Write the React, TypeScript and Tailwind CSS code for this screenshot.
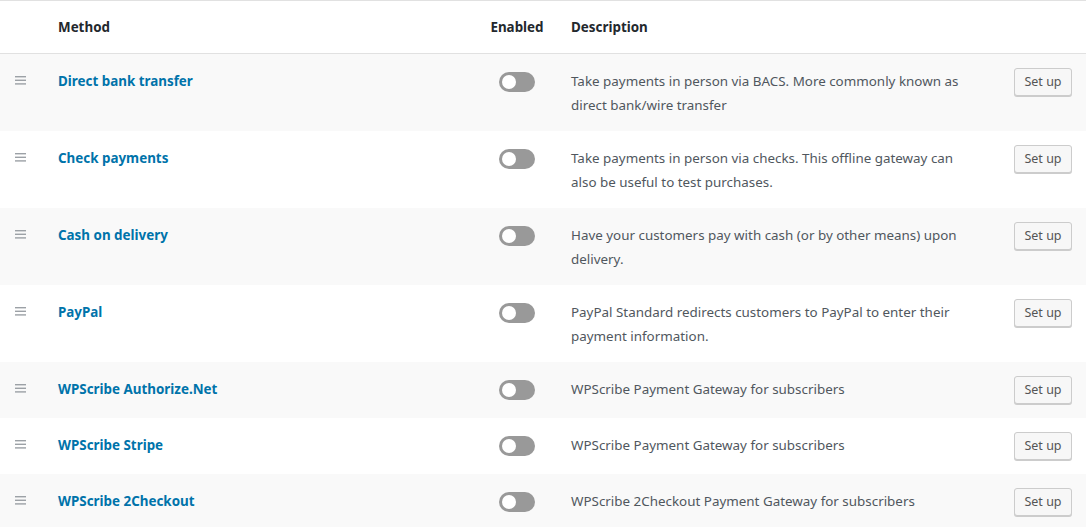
import React from "react";

type Gateway = {
  name: string;
  description: string;
};

const gateways: Gateway[] = [
  {
    name: "Direct bank transfer",
    description: "Take payments in person via BACS. More commonly known as direct bank/wire transfer",
  },
  {
    name: "Check payments",
    description: "Take payments in person via checks. This offline gateway can also be useful to test purchases.",
  },
  {
    name: "Cash on delivery",
    description: "Have your customers pay with cash (or by other means) upon delivery.",
  },
  {
    name: "PayPal",
    description: "PayPal Standard redirects customers to PayPal to enter their payment information.",
  },
  { name: "WPScribe Authorize.Net", description: "WPScribe Payment Gateway for subscribers" },
  { name: "WPScribe Stripe", description: "WPScribe Payment Gateway for subscribers" },
  { name: "WPScribe 2Checkout", description: "WPScribe 2Checkout Payment Gateway for subscribers" },
];

const cols = "grid grid-cols-[58px_420px_78px_1fr_82px]";

const Handle = () => (
  <svg width="11" height="9" viewBox="0 0 11 9" className="mt-[8px]">
    <rect x="0" y="0" width="11" height="1.4" fill="#9ca1a6" />
    <rect x="0" y="3.6" width="11" height="1.4" fill="#9ca1a6" />
    <rect x="0" y="7.2" width="11" height="1.4" fill="#9ca1a6" />
  </svg>
);

const Toggle = () => (
  <span className="mt-[4px] flex h-[20px] w-[36px] items-center rounded-full bg-[#999] pl-[3px]">
    <span className="h-[14px] w-[14px] rounded-full bg-white" />
  </span>
);

export default function App() {
  return (
    <div className="w-[1086px] bg-white text-[13.4px] font-['Noto_Sans',sans-serif] text-[#50575e]">
      <div className={`${cols} border-y border-[#e1e1e1] leading-[24px] font-bold text-[#23282d]`}>
        <div />
        <div className="py-[14px]">Method</div>
        <div className="py-[14px] text-center">Enabled</div>
        <div className="py-[14px] pl-[15px]">Description</div>
        <div />
      </div>
      {gateways.map((g, i) => (
        <div key={g.name} className={`${cols} ${i % 2 === 0 ? "bg-[#f9f9f9]" : "bg-white"} py-[14px] leading-[24px]`}>
          <div className="flex items-start pl-[15px]">
            <Handle />
          </div>
          <div className="pt-[1px]">
            <a href="#" className="font-bold text-[#0073aa]">
              {g.name}
            </a>
          </div>
          <div className="flex justify-center">
            <Toggle />
          </div>
          <div className="pl-[15px] pr-[36px] pt-[1px]">{g.description}</div>
          <div className="flex justify-end pr-[14px]">
            <button className="h-[28px] w-[58px] rounded-[3px] border border-[#ccc] bg-[#f7f7f7] text-[12.5px] leading-[26px] text-[#555] shadow-[0_1px_0_#ccc]">
              Set up
            </button>
          </div>
        </div>
      ))}
    </div>
  );
}
